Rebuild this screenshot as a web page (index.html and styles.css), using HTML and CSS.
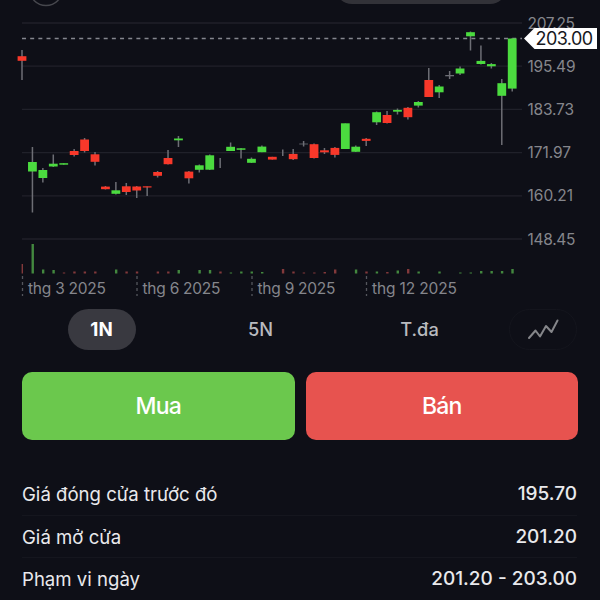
FILE: index.html
```html
<!DOCTYPE html>
<html lang="vi">
<head>
    <meta charset="UTF-8">
    <meta name="viewport" content="width=device-width, initial-scale=1.0">
    <title>203.00</title>
    <link rel="stylesheet" href="styles.css">
</head>
<body>
<div class="container">
    <svg class="chart" width="600" height="300" viewBox="0 0 600 300">
        <circle class="round-btn" cx="46" cy="-11" r="16.5"/>
        <rect class="top-pill" x="335" y="-30" width="172" height="34" rx="17"/>
        <g id="grid"></g>
        <g id="months"></g>
        <g id="volume"></g>
        <path class="price-line" d="M22 38.5H522"/>
        <g id="candles"></g>
        <path class="price-tag" d="M524 38.5L534.5 28H597V49H534.5Z"/>
        <text class="price-text" x="535.5" y="44.8" textLength="57.5">203.00</text>
    </svg>
    <div class="range">
        <div class="range-item"><span class="range-btn active">1N</span></div>
        <div class="range-item"><span class="range-btn">5N</span></div>
        <div class="range-item"><span class="range-btn">T.đa</span></div>
        <div class="line-btn">
            <svg width="32" height="22" viewBox="0 0 32 22">
                <path d="M2 19L8.5 11.5L13 17.5L19 7L24.5 13L30.5 1.5"/>
            </svg>
        </div>
    </div>
    <div class="trade">
        <div class="trade-btn buy">Mua</div>
        <div class="trade-btn sell">Bán</div>
    </div>
    <ul class="info">
        <li><span>Giá đóng cửa trước đó</span><b>195.70</b></li>
        <li><span>Giá mở cửa</span><b>201.20</b></li>
        <li><span>Phạm vi ngày</span><b>201.20 - 203.00</b></li>
    </ul>
</div>
<script src="chart.js"></script>
</body>
</html>
```
FILE: styles.css
```css
*{
    margin: 0;
    padding: 0;
    box-sizing: border-box;
}
body{
    background: #0e0f17;
    color: #e9e9ec;
    font-family: Inter, "Liberation Sans", sans-serif;
}
.container{
    width: 600px;
    height: 600px;
    overflow: hidden;
}
.chart{
    display: block;
}
.round-btn{
    fill: none;
    stroke: #46474d;
    stroke-width: 1.5;
}
.top-pill{
    fill: #323238;
}
.grid-line{
    stroke: #20212a;
    stroke-width: 1.3;
}
.axis-text{
    fill: #85868c;
    font-size: 15.5px;
}
.month-line{
    stroke: #55565d;
    stroke-width: 1.3;
    stroke-dasharray: 3 3;
}
.price-line{
    stroke: #85868e;
    stroke-width: 1.5;
    stroke-dasharray: 4 4.17;
}
.price-tag{
    fill: #fff;
}
.price-text{
    fill: #17181d;
    font-size: 18px;
}
.wick{
    fill: #6d6e75;
}
.up{
    fill: #4bdb3f;
}
.down{
    fill: #f8382a;
}
.flat{
    fill: #6d6e75;
}
.vol-up{
    fill: #43883f;
}
.vol-down{
    fill: #82393b;
}
.range{
    display: flex;
    align-items: center;
    height: 59px;
    padding: 0 22px;
}
.range-item{
    width: 159px;
    display: flex;
    justify-content: center;
}
.range-btn{
    width: 68px;
    height: 41px;
    line-height: 41px;
    border-radius: 21px;
    text-align: center;
    font-size: 18.3px;
    font-weight: 500;
    color: #b9babf;
}
.range-btn.active{
    background: #393940;
    color: #fff;
    font-size: 18.8px;
    font-weight: 700;
}
.line-btn{
    width: 68px;
    height: 41px;
    margin-left: 10px;
    border: 1px solid #14151d;
    border-radius: 21px;
    display: flex;
    justify-content: center;
    align-items: center;
}
.line-btn path{
    fill: none;
    stroke: #85868a;
    stroke-width: 2;
    stroke-linecap: round;
    stroke-linejoin: round;
}
.trade{
    display: flex;
    gap: 11px;
    padding: 13px 22px 0;
}
.trade-btn{
    flex: 1;
    height: 68px;
    line-height: 69px;
    border-radius: 10px;
    text-align: center;
    font-size: 23px;
    font-weight: 500;
    letter-spacing: -0.8px;
    color: #fff;
}
.buy{
    background: #6bc84d;
}
.sell{
    background: #e7534f;
}
.info{
    list-style: none;
    padding: 33px 23px 0 22px;
}
.info li{
    display: flex;
    justify-content: space-between;
    height: 42.7px;
    line-height: 42px;
    border-bottom: 1px solid #15161e;
    font-size: 18.6px;
}
.info b{
    font-weight: 500;
    font-size: 19px;
}
```
FILE: chart.js
```js
// type, wick top, body top, body bottom, wick bottom, volume height, volume colour
var data = [
    ["down", 50, 56.2, 60.8, 80, 9.5, "down"],
    ["up", 147, 162, 171.5, 212.5, 29.5, "up"],
    ["up", 168, 170, 178, 182.5, 4, "up"],
    ["up", 154.5, 163.7, 166.5, 167, 3.5, "up"],
    ["up", 163.3, 163.2, 164.7, 164.7, 1, "down"],
    ["down", 149, 151, 155, 156.5, 2, "down"],
    ["down", 138, 139.5, 151, 152.5, 2, "down"],
    ["down", 152, 154.3, 161.8, 165.5, 2, "down"],
    ["down", 186, 186.6, 189.2, 189.5, 0, "down"],
    ["up", 182, 190.3, 193.8, 194.5, 4, "up"],
    ["down", 183, 186.3, 192, 195, 2, "down"],
    ["down", 186, 186.5, 190.5, 198, 2, "down"],
    ["down", 186.5, 186.3, 187.5, 196, 0, "down"],
    ["down", 171, 172, 175.8, 177.5, 2, "down"],
    ["down", 150, 158, 164.2, 164.5, 2, "down"],
    ["up", 136, 138.5, 140.3, 147, 3.5, "up"],
    ["down", 171, 171.6, 178.3, 183.5, 0, "up"],
    ["up", 164.5, 165.3, 169.8, 172.5, 3.5, "up"],
    ["up", 154.5, 155.3, 169.7, 170, 3.5, "up"],
    ["flat", 158, 159, 159, 168, 2, "down"],
    ["up", 142.5, 146.8, 151, 151, 1, "up"],
    ["up", 148, 148.3, 149.8, 158.5, 2, "up"],
    ["up", 157.5, 158.8, 162.8, 163, 2, "up"],
    ["up", 145.5, 146.6, 152.2, 152.2, 1.5, "up"],
    ["down", 156.8, 156.8, 159.6, 159.6, 0, "up"],
    ["flat", 149.5, 150, 150, 156, 4.5, "down"],
    ["down", 149, 153.9, 159.2, 160, 2, "down"],
    ["flat", 141, 143.6, 144.4, 146.5, 1, "down"],
    ["down", 143.5, 144.2, 158, 158.5, 1, "down"],
    ["down", 148, 150.3, 152.3, 154, 1.5, "down"],
    ["down", 147, 147.9, 154.9, 157.5, 4, "down"],
    ["up", 123.5, 123.3, 149, 149, 0, "up"],
    ["up", 145.5, 146.7, 151.8, 152, 4, "up"],
    ["down", 138, 138.8, 140.9, 146, 2, "down"],
    ["up", 111.5, 112.2, 122.3, 125, 2, "up"],
    ["down", 111, 115, 123, 123.5, 1.5, "down"],
    ["up", 108.5, 109.9, 111.7, 114.5, 3, "up"],
    ["down", 107, 107.8, 117.2, 119.5, 4.5, "down"],
    ["up", 101, 102, 105.6, 107.5, 2, "up"],
    ["down", 68, 80, 97, 97, 0, "up"],
    ["up", 85, 86.5, 92.3, 98, 2, "up"],
    ["flat", 71, 75, 76.3, 79, 0, "up"],
    ["up", 66.5, 68.5, 73.5, 75, 1, "up"],
    ["up", 31.5, 32.2, 36.3, 50.5, 1, "up"],
    ["up", 45.5, 60.9, 64, 64.5, 2.5, "up"],
    ["up", 63, 64.1, 66.3, 68.5, 2.5, "up"],
    ["up", 79, 83.2, 95.8, 145, 2.5, "up"],
    ["up", 38, 38.5, 88.6, 91.5, 4.5, "up"]
];
var prices = ["207.25", "195.49", "183.73", "171.97", "160.21", "148.45"];
var widths = [47.5, 48, 46.5, 43.5, 45.5, 48];
var months = [
    [22.5, "thg 3 2025", 78],
    [137, "thg 6 2025", 78],
    [252, "thg 9 2025", 78],
    [366.5, "thg 12 2025", 85]
];

var grid = "";
for(var i=0;i<prices.length;i++){
    var y = 23 + i * 43.2;
    grid += '<path class="grid-line" d="M22 ' + y + 'H522"/>';
    grid += '<text class="axis-text" x="527.5" y="' + (y + 5.6) + '" textLength="' + widths[i] + '">' + prices[i] + '</text>';
}
document.getElementById("grid").innerHTML = grid;

var label = "";
for(var i=0;i<months.length;i++){
    var m = months[i];
    label += '<path class="month-line" d="M' + m[0] + ' 276V296"/>';
    label += '<text class="axis-text" x="' + (m[0] + 5.5) + '" y="293.5" textLength="' + m[2] + '">' + m[1] + '</text>';
}
document.getElementById("months").innerHTML = label;

var candles = "";
var volume = "";
for(var i=0;i<data.length;i++){
    var d = data[i];
    var x = 22 + i * 10.43;
    candles += rect("wick", x, 1.5, d[1], d[4]);
    candles += rect(d[0], x, 8.8, d[2], d[3]);
    volume += rect("vol-" + d[6], x + 0.3, i == 0 ? 1.4 : 2.4, 273.5 - d[5], 273.5);
}
document.getElementById("candles").innerHTML = candles;
document.getElementById("volume").innerHTML = volume;

function rect(name, x, w, top, bottom){
    return '<rect class="' + name + '" x="' + (x - w / 2) + '" y="' + top + '" width="' + w + '" height="' + Math.max(bottom - top, 0) + '"/>';
}
```
